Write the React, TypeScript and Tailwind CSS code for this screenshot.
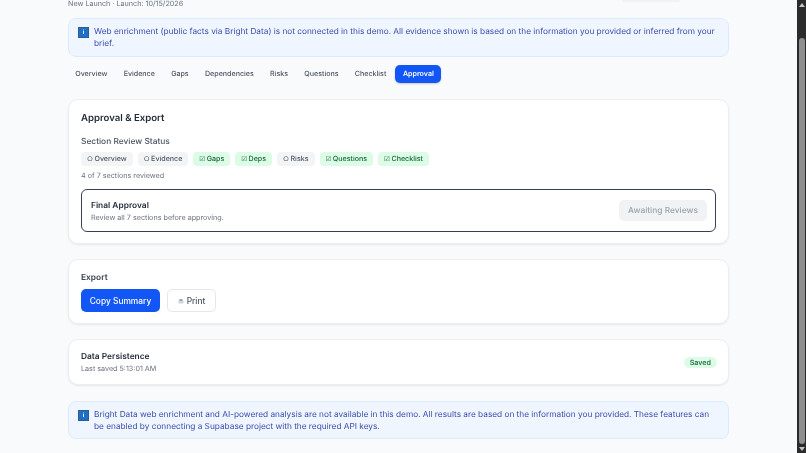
import React from "react";

const font = { fontFamily: "Inter, sans-serif" };

function Info() {
  return (
    <span className="mt-[3px] flex h-[9px] w-[9px] shrink-0 items-center justify-center bg-[#1f6fc4] text-[6px] leading-none font-bold text-white outline outline-1 outline-[#2b5c94]">
      i
    </span>
  );
}

function Notice({ children, className }: { children: React.ReactNode; className: string }) {
  return (
    <div className={`flex gap-[6px] rounded-[8px] border border-[#dbeafe] bg-[#eff6ff] pt-[6px] pr-[10px] pb-[6px] pl-[10px] text-[#3a4aad] ${className}`}>
      <Info />
      <p className="text-[8.27px] leading-[12px]">{children}</p>
    </div>
  );
}

const tabs = ["Overview", "Evidence", "Gaps", "Dependencies", "Risks", "Questions", "Checklist"];
const chips: [string, boolean][] = [
  ["Overview", false],
  ["Evidence", false],
  ["Gaps", true],
  ["Deps", true],
  ["Risks", false],
  ["Questions", true],
  ["Checklist", true],
];

function Card({ children, className }: { children: React.ReactNode; className: string }) {
  return <div className={`rounded-[10px] border border-[#eceef2] bg-white shadow-[0_1px_2px_rgba(0,0,0,0.08)] ${className}`}>{children}</div>;
}

export default function App() {
  return (
    <div style={font} className="flex h-[453px] w-[806px] overflow-hidden bg-[#f8fafc] [text-rendering:geometricPrecision]">
      <main className="w-[797px] shrink-0 px-[68px] blur-[0.3px]">
        <div className="flex h-[18px] items-start justify-between">
          <p className="-mt-[2px] text-[7.2px] leading-[12px] text-[#6b7280]">New Launch · Launch: 10/15/2026</p>
          <div className="-mt-[4px] mr-[49px] h-[6px] w-[58px] rounded-[6px] bg-[#f1f2f4]" />
        </div>
        <Notice className="h-[39px]">
          Web enrichment (public facts via Bright Data) is not connected in this demo. All evidence shown is based on the information you provided or inferred from your brief.
        </Notice>
        <nav className="mt-[8px] flex h-[18px] items-center gap-[1.9px] text-[7.1px] font-medium text-[#4b5563]">
          {tabs.map((t) => (
            <span key={t} className="px-[7.2px] pt-[1px]">{t}</span>
          ))}
          <span className="flex h-[18px] items-center rounded-[5px] bg-[#1257f5] px-[7.5px] pt-[1px] font-semibold text-white shadow-[0_1px_2px_rgba(0,0,0,0.2)]">Approval</span>
        </nav>
        <Card className="mt-[16px] h-[145px] px-[12px] pt-[12px]">
          <h2 className="text-[9.6px] leading-[14px] font-semibold text-[#1f2937]">Approval &amp; Export</h2>
          <h3 className="mt-[10px] text-[8.4px] leading-[12px] font-medium text-[#4b5563]">Section Review Status</h3>
          <div className="mt-[4px] flex gap-[5px]">
            {chips.map(([c, done]) => (
              <span key={c} className={`flex h-[14px] items-center gap-[1.5px] rounded-[4px] px-[6px] text-[7.1px] font-medium ${done ? "bg-[#dcfce7] text-[#166534]" : "bg-[#f3f4f6] text-[#4b5563]"}`}>
                <span className="mt-[1px] text-[6.5px] leading-none">{done ? "☑" : "○"}</span>
                {c}
              </span>
            ))}
          </div>
          <p className="mt-[5px] text-[7.2px] leading-[10px] text-[#6b7280]">4 of 7 sections reviewed</p>
          <div className="mt-[8px] flex h-[43px] items-center justify-between rounded-[6px] border border-[#374151] bg-white pr-[8px] pl-[9px]">
            <div className="pt-[1px]">
              <p className="text-[8.4px] leading-[12px] font-semibold text-[#1f2937]">Final Approval</p>
              <p className="text-[7.2px] leading-[11px] text-[#6b7280]">Review all 7 sections before approving.</p>
            </div>
            <span className="flex h-[21px] w-[88px] items-center justify-center rounded-[5px] bg-[#f1f2f4] pt-[1px] text-[8.4px] font-medium text-[#9ca3af]">Awaiting Reviews</span>
          </div>
        </Card>
        <Card className="mt-[15px] h-[65px] px-[12px] pt-[13px]">
          <h3 className="text-[8.4px] leading-[11px] font-semibold text-[#374151]">Export</h3>
          <div className="mt-[5px] flex gap-[7px]">
            <button className="flex h-[23px] w-[79px] items-center justify-center rounded-[5px] bg-[#1257f5] pt-[1px] text-[8.4px] font-medium text-white">Copy Summary</button>
            <button className="flex h-[23px] w-[49px] items-center justify-center gap-[3px] rounded-[5px] border border-[#e5e7eb] bg-white pt-[1px] text-[8.4px] font-medium text-[#4b5563]">
              <svg width="6" height="5" viewBox="0 0 6 5"><rect x="0.5" y="1.5" width="5" height="3" fill="#d1d5db" /><rect x="1.5" y="0" width="3" height="2" fill="#9ca3af" /></svg>
              Print
            </button>
          </div>
        </Card>
        <Card className="mt-[15px] flex h-[46px] items-center justify-between pr-[11px] pl-[12px]">
          <div>
            <p className="text-[8.4px] leading-[12px] font-semibold text-[#1f2937]">Data Persistence</p>
            <p className="text-[7.2px] leading-[11px] text-[#6b7280]">Last saved 5:13:01 AM</p>
          </div>
          <span className="rounded-full bg-[#dcfce7] px-[6px] py-[1px] text-[7.2px] leading-[9px] font-medium text-[#166534]">Saved</span>
        </Card>
        <Notice className="mt-[16px] h-[38px]">
          Bright Data web enrichment and AI-powered analysis are not available in this demo. All results are based on the information you provided. These features can be enabled by connecting a Supabase project with the required API keys.
        </Notice>
      </main>
      <aside className="flex h-[453px] w-[9px] shrink-0 flex-col items-center bg-[#2b2b2b] pb-[2px]">
        <span className="mt-[3px] h-0 w-0 border-x-[3px] border-b-[4px] border-x-transparent border-b-[#c4c4c4]" />
        <span className="mt-[31px] w-[6px] flex-1 rounded-full bg-[#8f8f8f]" />
        <span className="mt-[3px] h-0 w-0 border-x-[3px] border-t-[4px] border-x-transparent border-t-[#c4c4c4]" />
      </aside>
    </div>
  );
}
